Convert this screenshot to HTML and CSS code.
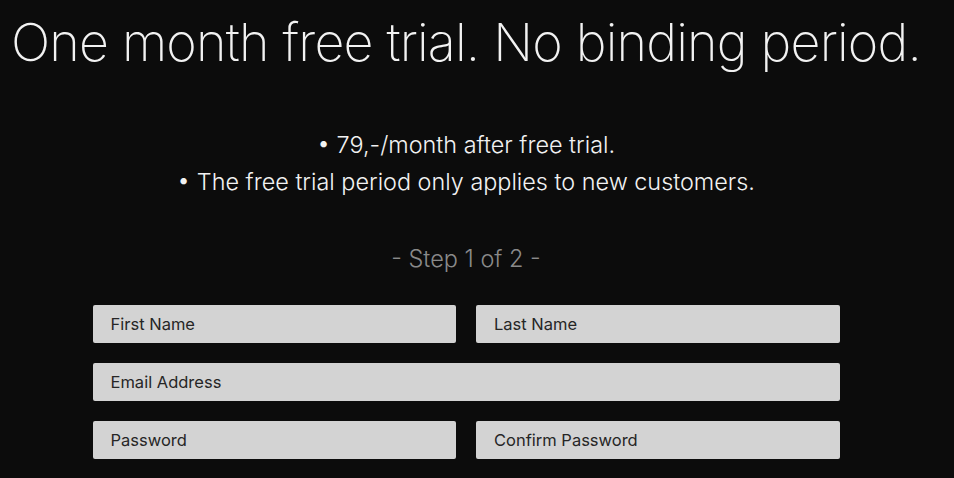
FILE: index.html
```html
<!DOCTYPE html>
<html lang="en">
<head>
  <meta charset="UTF-8" />
  <meta name="viewport" content="width=device-width, initial-scale=1.0"/>
  <title>Free Trial</title>
  <link rel="stylesheet" href="styles.css">
</head>
<body>
  <div class="page">
    <h1>One month free trial. No binding period.</h1>

    <ul class="perks">
      <li>• 79,-/month after free trial.</li>
      <li>• The free trial period only applies to new customers.</li>
    </ul>

    <p class="step">- Step 1 of 2 -</p>

    <form class="signup">
      <input name="firstName" placeholder="First Name" />
      <input name="lastName" placeholder="Last Name" />
      <input class="wide" name="email" type="email" placeholder="Email Address" />
      <input name="password" type="password" placeholder="Password" />
      <input name="confirm" type="password" placeholder="Confirm Password" />
    </form>
  </div>
</body>
</html>
```

FILE: styles.css
```css
body {
  font-family: 'Inter', 'Lato', sans-serif;
  margin: 0;
  padding: 0;
  background-color: #0c0c0c;
  color: #f2f2f2;
}

.page {
  width: 932px;
  text-align: center;
  overflow: hidden;
}

h1 {
  margin: 10px 0 0;
  font-size: 52px;
  font-weight: 200;
  line-height: 66px;
  letter-spacing: -0.8px;
  white-space: nowrap;
}

.perks {
  list-style: none;
  margin: 50px 0 0;
  padding: 0;
  font-size: 23.4px;
  font-weight: 300;
  line-height: 37px;
}

.step {
  margin: 41px 0 0;
  color: #8a8a8a;
  font-size: 23.5px;
  font-weight: 300;
  line-height: 36px;
}

.signup {
  width: 747px;
  margin: 28px auto 0;
  display: grid;
  grid-template-columns: 1fr 1fr;
  gap: 20px;
}

.signup input {
  height: 38px;
  padding: 0 18px;
  border: none;
  border-radius: 2px;
  background-color: #d3d3d3;
  box-sizing: border-box;
  font-family: inherit;
  font-size: 16.5px;
  color: #262626;
}

.signup input::placeholder {
  color: #262626;
}

.signup .wide {
  grid-column: 1 / 3;
}
```
